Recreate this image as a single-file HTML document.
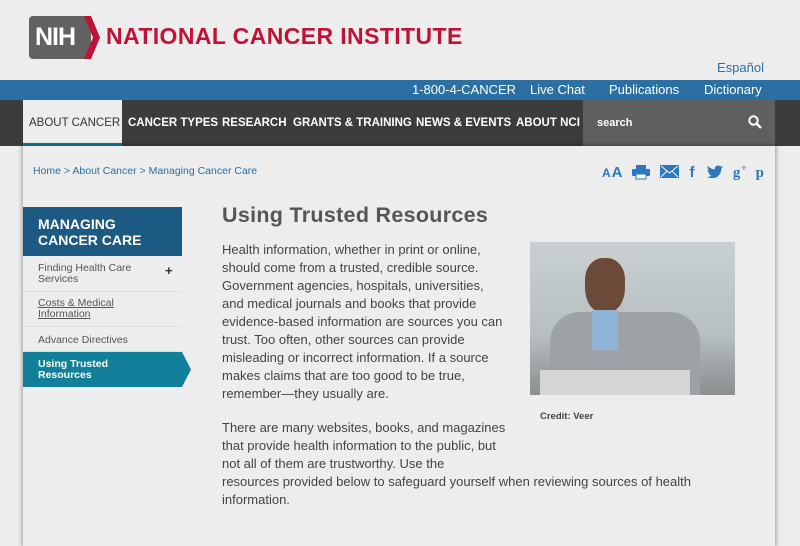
<!DOCTYPE html>
<html><head><style>
*{margin:0;padding:0;box-sizing:border-box}
body{width:800px;height:514px;overflow:hidden;background:#ededed;font-family:"Liberation Sans",sans-serif;position:relative;color:#3f3f3f}
.a{position:absolute}
.logo{left:29px;top:16px;width:62px;height:43px;background:#616161;border-radius:4px;color:#fff;font-weight:bold;font-size:25px;line-height:43px;padding-left:6px;letter-spacing:-1px}
.nci{left:106px;top:23px;color:#bf1236;font-weight:bold;font-size:23px;letter-spacing:0.4px}
.blue{left:0;top:80px;width:800px;height:20px;background:#2b6fa3}
.blue span{position:absolute;top:2px;color:#fff;font-size:13px}
.nav{left:0;top:100px;width:800px;height:46px;background:#3c3c3c}
.nav span{position:absolute;top:17px;color:#fff;font-size:11.5px;font-weight:bold}
.panel{left:23px;top:146px;width:752px;height:400px;background:#ededed;box-shadow:0 0 4px 1px rgba(0,0,0,.35)}
p{font-size:13px;line-height:18px;color:#444}
.side div{position:absolute;left:0;width:159px;font-size:10.5px;color:#555;padding-left:15px;border-bottom:1px solid #ddd}
</style></head><body>
<div class="a logo">NIH</div>
<svg class="a" style="left:84px;top:16px" width="16" height="43"><path d="M0 0 L7 0 L16 21.5 L7 43 L0 43 L9 21.5Z" fill="#bf1236"/></svg>
<div class="a nci">NATIONAL CANCER INSTITUTE</div>
<div class="a" style="left:717px;top:60px;font-size:13px;color:#2b6fa3">Español</div>
<div class="a blue"><span style="left:412px">1-800-4-CANCER</span><span style="left:530px">Live Chat</span><span style="left:609px">Publications</span><span style="left:704px">Dictionary</span></div>
<div class="a nav">
<div class="a" style="left:23px;top:0;width:99px;height:46px;background:#ededed;border-bottom:3px solid #12809a"></div>
<span style="left:29px;color:#333;font-weight:normal">ABOUT CANCER</span>
<span style="left:128px">CANCER TYPES</span><span style="left:222px">RESEARCH</span><span style="left:293px">GRANTS &amp; TRAINING</span><span style="left:416px">NEWS &amp; EVENTS</span><span style="left:516px">ABOUT NCI</span>
<div class="a" style="left:583px;top:0;width:192px;height:46px;background:#5f5f5f"></div>
<span style="left:597px;font-size:11px">search</span>
<svg class="a" style="left:748px;top:15px" width="14" height="14"><circle cx="5.5" cy="5.5" r="4.2" stroke="#fff" stroke-width="2" fill="none"/><path d="M8.5 8.5L13 13" stroke="#fff" stroke-width="2.4"/></svg>
</div>
<div class="a panel"></div>
<div class="a" style="left:33px;top:165px;font-size:10.5px;color:#2b6fa3">Home &gt; About Cancer &gt; Managing Cancer Care</div>
<div class="a" style="left:602px;top:163px;color:#2b78c0;font-size:15px;font-weight:bold;letter-spacing:1px;white-space:nowrap">
<span style="font-size:12px">A</span>A
<svg width="18" height="16" style="vertical-align:-3px;margin-left:4px"><rect x="4" y="1" width="10" height="4" fill="#2b78c0"/><rect x="0" y="5" width="18" height="7" rx="1" fill="#2b78c0"/><rect x="4" y="10" width="10" height="5" fill="#fff" stroke="#2b78c0"/></svg>
<svg width="19" height="13" style="vertical-align:-1px;margin-left:5px"><rect width="19" height="13" fill="#2b78c0"/><path d="M1 1L9.5 8L18 1M1 12L7 6M18 12L12 6" stroke="#fff" fill="none"/></svg>
<span style="margin-left:5px">f</span>
<svg width="16" height="13" style="vertical-align:-1px;margin-left:6px"><path d="M16 2c-.6.3-1.2.4-1.9.5.7-.4 1.2-1 1.4-1.8-.6.4-1.300.6-2.1.8A3.3 3.3 0 0 0 7.8 4.4 9.3 9.3 0 0 1 1 1a3.3 3.3 0 0 0 1 4.4c-.5 0-1-.2-1.5-.4 0 1.6 1.1 2.900 2.6 3.2-.5.1-1 .2-1.5.1.4 1.3 1.6 2.3 3.1 2.3A6.6 6.6 0 0 1 0 11.9 9.3 9.3 0 0 0 5 13.3c6 0 9.3-5 9.3-9.3v-.4c.7-.5 1.2-1 1.7-1.6z" fill="#2b78c0"/></svg>
<span style="margin-left:5px;font-family:'Liberation Serif',serif">g<sup style="font-size:9px">+</sup></span>
<span style="margin-left:3px;font-family:'Liberation Serif',serif">p</span>
</div>
<div class="a side" style="left:23px;top:207px;width:159px">
<div style="top:0;height:49px;background:#1c5a84;color:#fff;font-size:14px;font-weight:bold;padding:9px 0 0 15px;line-height:16px;border:none">MANAGING<br>CANCER CARE</div>
<div style="top:49px;height:36px;padding-top:7px;line-height:11px">Finding Health Care<br>Services<span style="position:absolute;left:142px;top:9px;font-size:13px;font-weight:bold;color:#333">+</span></div>
<div style="top:85px;height:35px;padding-top:6px;line-height:11px;text-decoration:underline">Costs &amp; Medical<br>Information</div>
<div style="top:120px;height:25px;padding-top:7px">Advance Directives</div>
<div style="top:145px;height:35px;background:#12809a;color:#fff;font-weight:bold;padding-top:7px;line-height:11px;border:none">Using Trusted<br>Resources</div>
<svg style="position:absolute;left:159px;top:145px" width="9" height="35"><path d="M0 0L9 17.5L0 35Z" fill="#12809a"/></svg>
</div>
<div class="a" style="left:222px;top:203px;font-size:21.5px;font-weight:bold;color:#555;letter-spacing:0.3px">Using Trusted Resources</div>
<p class="a" style="left:222px;top:241px;width:285px">Health information, whether in print or online, should come from a trusted, credible source. Government agencies, hospitals, universities, and medical journals and books that provide evidence-based information are sources you can trust. Too often, other sources can provide misleading or incorrect information. If a source makes claims that are too good to be true, remember—they usually are.</p>
<p class="a" style="left:222px;top:419px;width:470px">There are many websites, books, and magazines<br>that provide health information to the public, but<br>not all of them are trustworthy. Use the<br>resources provided below to safeguard yourself when reviewing sources of health information.</p>
<div class="a" style="left:530px;top:242px;width:205px;height:153px;background:linear-gradient(180deg,#c9d0d3 0%,#b8bfc0 60%,#8a8f90 100%)">
<div class="a" style="left:55px;top:10px;width:40px;height:60px;background:#6b4a3a;border-radius:45% 45% 40% 40%;border-top:6px solid #ccc"></div>
<div class="a" style="left:20px;top:70px;width:150px;height:83px;background:#9da2a6;border-radius:30px 30px 0 0"></div>
<div class="a" style="left:62px;top:68px;width:26px;height:40px;background:#8fb4d8"></div>
<div class="a" style="left:10px;top:128px;width:150px;height:25px;background:#d4d5d6"></div>
</div>
<div class="a" style="left:540px;top:411px;font-size:9.5px;font-weight:bold;color:#444">Credit: Veer</div>
</body></html>
